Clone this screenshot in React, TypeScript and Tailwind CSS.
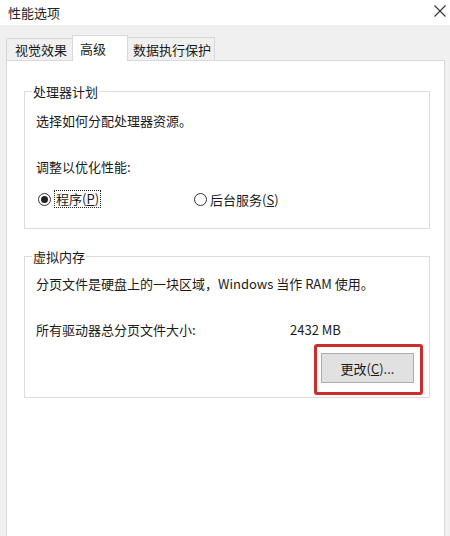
import React from "react";

const font = { fontFamily: '"Noto Sans CJK SC", "Noto Sans", sans-serif' };

function Radio({ checked }: { checked?: boolean }) {
  return (
    <span className="flex h-[13px] w-[13px] items-center justify-center rounded-full border border-[#333]">
      {checked && <span className="h-[7px] w-[7px] rounded-full bg-[#222]" />}
    </span>
  );
}

function Group({ title, children }: { title: string; children: React.ReactNode }) {
  return (
    <fieldset className="border border-[#dcdcdc] px-0">
      <legend className="ml-[7px] px-[1px] text-[13px] leading-[17px] text-[#1a1a1a]">{title}</legend>
      {children}
    </fieldset>
  );
}

export default function App() {
  return (
    <div className="h-[536px] w-[450px] overflow-hidden bg-[#f0f0f0] text-[13px] text-[#1a1a1a]" style={font}>
      {/* title bar */}
      <div className="flex h-[25px] items-center justify-between bg-white pl-[8px] pr-[4px]">
        <span className="text-[13px] leading-[17px] text-[#222]">性能选项</span>
        <svg width="12" height="12" viewBox="0 0 12 12" className="mb-[3px]">
          <path d="M0.5 0.5 L11.5 11.5 M11.5 0.5 L0.5 11.5" stroke="#333" strokeWidth="1.1" fill="none" />
        </svg>
      </div>

      {/* tabs */}
      <div className="ml-[6px] mt-[10px] flex h-[25px] items-end leading-[17px]">
        <div className="flex h-[22px] w-[66px] items-center border border-b-0 border-r-0 border-[#d9d9d9] bg-[#f0f0f0] pl-[8px]">
          视觉效果
        </div>
        <div className="relative z-10 -mb-px flex h-[26px] w-[56px] items-start border border-b-0 border-[#d9d9d9] bg-white pl-[7px] pt-[4px]">
          高级
        </div>
        <div className="flex h-[23px] w-[87px] items-center border border-b-0 border-l-0 border-[#d9d9d9] bg-[#f0f0f0] pl-[5px]">
          数据执行保护
        </div>
      </div>

      {/* panel */}
      <div className="ml-[6px] h-[480px] w-[439px] border border-[#d9d9d9] bg-white pl-[17px] pr-[14px] pt-[22px] leading-[17px]">
        <Group title="处理器计划">
          <div className="pb-[20px] pl-[11px]">
            <p className="mt-[12px]">选择如何分配处理器资源。</p>
            <p className="mt-[29px]">调整以优化性能:</p>
            <div className="mt-[15px] flex h-[18px] items-center">
              <div className="ml-[2px] flex w-[156px] items-center">
                <Radio checked />
                <span className="ml-[3px] border border-dotted border-[#222] px-[1px] leading-[16px]">
                  程序(<span className="underline">P</span>)
                </span>
              </div>
              <div className="flex items-center">
                <Radio />
                <span className="ml-[3px]">
                  后台服务(<span className="underline">S</span>)
                </span>
              </div>
            </div>
          </div>
        </Group>

        <div className="mt-[19px]">
          <Group title="虚拟内存">
            <div className="pb-[14px] pl-[11px] pr-[15px]">
              <p className="mt-[10px]">分页文件是硬盘上的一块区域，Windows 当作 RAM 使用。</p>
              <div className="mt-[29px] flex">
                <span className="w-[254px]">所有驱动器总分页文件大小:</span>
                <span>2432 MB</span>
              </div>
              <div className="mt-[15px] flex justify-end">
                <div className="relative">
                  <button
                    type="button"
                    className="flex h-[30px] w-[93px] items-center justify-center border border-[#adadad] bg-[#e1e1e1] text-[13px]"
                  >
                    更改(<span className="underline">C</span>)...
                  </button>
                  <div className="absolute -bottom-[12px] -left-[7px] -right-[9px] -top-[9px] rounded-[3px] border-[3px] border-[#cc2e2e]" />
                </div>
              </div>
            </div>
          </Group>
        </div>
      </div>
    </div>
  );
}
